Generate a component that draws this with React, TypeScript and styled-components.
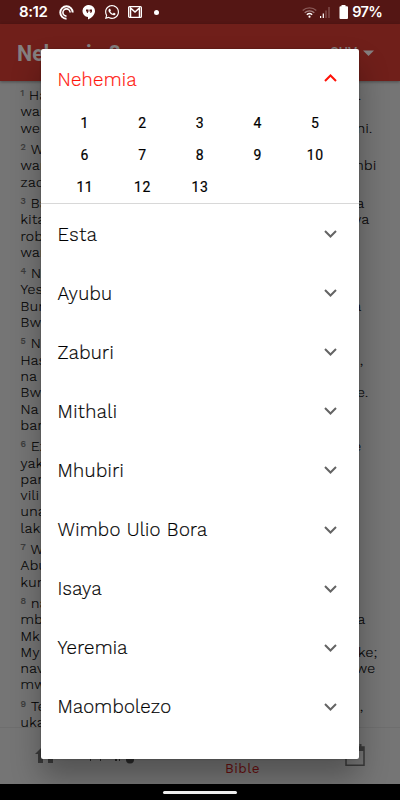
import React from "react";
import styled, { createGlobalStyle } from "styled-components";
import { FaWhatsapp } from "react-icons/fa";

const GlobalStyle = createGlobalStyle`
  * { box-sizing: border-box; }
  body { margin: 0; overflow: hidden; background: #000; }
`;

const reading = '"Work Sans", Inter, "Liberation Sans", sans-serif';

const Screen = styled.div`
  position: relative;
  width: 400px;
  height: 800px;
  overflow: hidden;
  display: flex;
  flex-direction: column;
  background: #757575;
  font-family: ${reading};
`;

const StatusBar = styled.header`
  height: 24px;
  flex: none;
  display: flex;
  align-items: center;
  padding: 0 18px 0 19px;
  background: #541614;
  color: #fff;
  svg { flex: none; display: block; }
`;

const Clock = styled.span`
  width: 39.5px;
  font: 600 15px/24px Inter, sans-serif;
  letter-spacing: -0.4px;
`;

const StatusIcons = styled.div`
  display: flex;
  align-items: center;
  gap: 8px;
  flex: 1;
`;

const Dot = styled.i`
  width: 5px;
  height: 5px;
  margin-left: 4px;
  border-radius: 50%;
  background: #fff;
`;

const Battery = styled.span`
  font: 600 14.5px/24px Inter, sans-serif;
  letter-spacing: -0.7px;
  margin-left: 4px;
`;

const AppBar = styled.div`
  height: 57px;
  flex: none;
  display: flex;
  align-items: center;
  justify-content: space-between;
  padding: 0 26px 0 17px;
  background: #701f1a;
  color: #858080;
  box-shadow: 0 1px 3px rgba(0, 0, 0, 0.35);
  z-index: 1;
`;

const Title = styled.h1`
  margin: 0;
  padding-top: 2px;
  font: 700 21.5px/55px Roboto, sans-serif;
`;

const Version = styled.div`
  display: flex;
  align-items: center;
  gap: 6px;
  font: 500 14px/55px Roboto, sans-serif;
`;

const VersionName = styled.span`
  padding-top: 2px;
`;

const Scripture = styled.main`
  height: 646px;
  flex: none;
  overflow: hidden;
  padding: 6px 0 0 20.5px;
  color: #000;
`;

const Verse = styled.section`
  margin-bottom: 5.2px;
`;

const Line = styled.div<{ $end: number }>`
  display: flex;
  justify-content: space-between;
  width: ${(p) => p.$end - 21}px;
  height: 16.27px;
  font-size: 14px;
  line-height: 16.27px;
  font-weight: 300;
  letter-spacing: 0.4px;
  -webkit-text-stroke: 0.15px;
  white-space: pre;
`;

const VerseNumber = styled.sup`
  display: inline-block;
  font-size: 9px;
  line-height: 8px;
  vertical-align: 4px;
  font-weight: 500;
  color: #3c3c3c;
  margin-right: 4.5px;
`;

const BottomNav = styled.nav`
  height: 57px;
  flex: none;
  display: grid;
  grid-template-columns: 89px 46px 215px 10px;
  border-top: 1px solid #6e6e6e;
`;

const NavItem = styled.div<{ $active?: boolean }>`
  display: flex;
  flex-direction: column;
  align-items: center;
  padding-top: 16px;
  font-size: 13.5px;
  line-height: 16px;
  letter-spacing: 0.4px;
  color: ${(p) => (p.$active ? "#680e0e" : "#3a3a3a")};
  svg { flex: none; }
`;

const NavLabel = styled.span`
  margin-top: 15.5px;
`;

const GestureBar = styled.footer`
  height: 16px;
  flex: none;
  display: flex;
  justify-content: center;
  padding-top: 7px;
  background: #000;
  z-index: 3;
`;

const Handle = styled.i`
  width: 74px;
  height: 3px;
  border-radius: 2px;
  background: #eee;
`;

const Dialog = styled.div`
  position: absolute;
  z-index: 2;
  top: 49px;
  left: 41px;
  width: 318px;
  height: 710px;
  border-radius: 2px;
  background: #fff;
  box-shadow: 0 0 2px rgba(0, 0, 0, 0.35), 0 18px 30px rgba(0, 0, 0, 0.3);
`;

const Book = styled.div<{ $open?: boolean }>`
  height: ${(p) => (p.$open ? 58 : 59.1)}px;
  display: flex;
  align-items: center;
  justify-content: space-between;
  padding: ${(p) => (p.$open ? 3 : 2)}px 22px 0 16.5px;
  color: ${(p) => (p.$open ? "#ff1208" : "#000")};
`;

const BookName = styled.span<{ $spacing: number }>`
  font-size: 18.6px;
  line-height: 24px;
  font-weight: 300;
  -webkit-text-stroke: 0.2px;
  letter-spacing: ${(p) => p.$spacing}px;
`;

const Chevron = styled.svg<{ $open?: boolean }>`
  width: 13px;
  height: 8px;
  margin-top: ${(p) => (p.$open ? -3 : -1)}px;
  fill: none;
  stroke: ${(p) => (p.$open ? "#ff1208" : "#646464")};
  stroke-width: 2;
  transform: ${(p) => (p.$open ? "rotate(180deg)" : "none")};
`;

const Chapters = styled.div`
  height: 97px;
  display: grid;
  grid-template-columns: repeat(5, 57.6px);
  grid-auto-rows: 32px;
  padding: 0 15px;
  border-bottom: 1px solid #d8d8d8;
`;

const Chapter = styled.span`
  font: 400 14px/32px Roboto, sans-serif;
  -webkit-text-stroke: 0.2px;
  letter-spacing: 0.5px;
  text-align: center;
  color: #000;
`;

type TextLine = [left: string, right?: string, end?: number];

const verses: TextLine[][] = [
  [["Ha", ".", 362], ["wan"], ["wen", "ni.", 373]],
  [["Wa"], ["wan", "mbi", 377], ["zac"]],
  [["Ba", "a", 365], ["kita", "ya", 370], ["rob"], ["wan"]],
  [["Na"], ["Yes"], ["Bun", "a", 362], ["Bwa"]],
  [["Na"], ["Has", ",", 364], ["na"], ["Bwa", "e.", 369], ["Na"], ["bar"]],
  [["Ez", "e", 362], ["yak"], ["pan"], ["vili"], ["una"], ["lak"]],
  [["Wa"], ["Abu"], ["kun"]],
  [["na"], ["mb", "a", 366], ["Mk"], ["My", "ke;", 378], ["nav", "we", 376], ["mw"]],
  [["Te", ",", 364], ["uka"]],
];

const books: [string, number][] = [
  ["Esta", 0.5],
  ["Ayubu", 0.3],
  ["Zaburi", 0.3],
  ["Mithali", 0.4],
  ["Mhubiri", 0.35],
  ["Wimbo Ulio Bora", 0.28],
  ["Isaya", 0.3],
  ["Yeremia", 0.25],
  ["Maombolezo", 0.22],
];

const Arrow = ({ open = false }: { open?: boolean }) => (
  <Chevron $open={open} viewBox="0 0 13 8">
    <path d="M1 1l5.5 5.5L12 1" />
  </Chevron>
);

export default function App() {
  return (
    <>
      <GlobalStyle />
      <Screen>
        <StatusBar>
          <Clock>8:12</Clock>
          <StatusIcons>
            <svg width="15" height="15" viewBox="0 0 15 15" fill="none" stroke="#fff">
              <path d="M7.5 13.7A6.2 6.2 0 1 1 13.7 7.5" strokeWidth="2" />
              <path d="M7.5 11.1A3.6 3.6 0 1 1 11.1 7.5" strokeWidth="1.6" />
            </svg>
            <svg width="14" height="15" viewBox="0 0 14 15">
              <path d="M7 0a6 6 0 0 0-1 12v2.5C10 13 13 9.500 13 6A6 6 0 0 0 7 0" fill="#fff" />
              <path d="M4 4.500h2.500v2L5.500 8H4.700l.5-1.500H4zm3.500 0H10v2L9 8h-.8l.5-1.500H7.500z" fill="#541614" />
            </svg>
            <FaWhatsapp size={16} />
            <svg width="14" height="12" viewBox="0 0 14 12" fill="none" stroke="#fff">
              <rect x=".6" y=".6" width="12.800" height="10.800" rx="1" strokeWidth="1.200" />
              <path d="M2.500 11V2L7 6l4.500-4v9" strokeWidth="1.500" />
            </svg>
            <Dot />
          </StatusIcons>
          <svg width="15" height="12" viewBox="0 0 15 12" fill="none" strokeWidth="1.300">
            <path d="M.7 4.500a10 10 0 0 1 13.600 0" stroke="#8a5a58" />
            <path d="M2.700 6.700a7 7 0 0 1 9.600 0" stroke="#a58080" />
            <path d="M4.800 8.700a4 4 0 0 1 5.400 0" stroke="#fff" />
            <circle cx="7.500" cy="10.700" r="1.100" fill="#fff" />
          </svg>
          <svg width="14" height="12" viewBox="0 0 14 12">
            <path d="M3 10h1.200v2H3zM5.700 7.500h1.200V12H5.700z" fill="#fff" />
            <path d="M8.400 4.500h1.200V12H8.400zM11.400 1h1.200v11h-1.200z" fill="#8a5a58" />
          </svg>
          <svg width="17" height="14" viewBox="0 0 17 14">
            <path d="M10.500 0h4v1.300H16a1 1 0 0 1 1 1V13a1 1 0 0 1-1 1H9.500a1 1 0 0 1-1-1V2.300a1 1 0 0 1 1-1h1z" fill="#fff" />
          </svg>
          <Battery>97%</Battery>
        </StatusBar>
        <AppBar>
          <Title>Nehemia 8</Title>
          <Version>
            <VersionName>SUV</VersionName>
            <svg width="11" height="6" viewBox="0 0 11 6"><path d="M0 .5h11L5.500 6z" fill="#858080" /></svg>
          </Version>
        </AppBar>
        <Scripture>
          {verses.map((lines, i) => (
            <Verse key={i}>
              {lines.map(([left, right, end], j) => (
                <Line key={j} $end={end ?? 360}>
                  <span>
                    {j === 0 && <VerseNumber>{i + 1}</VerseNumber>}
                    {left}
                  </span>
                  {right && <span>{right}</span>}
                </Line>
              ))}
            </Verse>
          ))}
        </Scripture>
        <BottomNav>
          <NavItem>
            <svg width="20" height="19" viewBox="0 0 20 19" fill="#3a3a3a"><path d="M0 10L7 3V1h6l7 9h-2v9h-5v-6H8v6H3v-9z" /></svg>
          </NavItem>
          <NavItem>
            <svg width="46" height="20" viewBox="0 0 46 20" fill="#292929">
              <path d="M1 14h1v3H1zM11 14h1v3h-1zM26 14h2v3h-2zM30 14h1v3h-1z" />
              <circle cx="41" cy="15.500" r="4" />
            </svg>
          </NavItem>
          <NavItem $active>
            <NavLabel>Bible</NavLabel>
          </NavItem>
          <NavItem>
            <svg width="20" height="23" viewBox="0 0 20 23" fill="none" stroke="#3a3a3a" strokeWidth="1.500">
              <path d="M1 3h18v18.200H1z" />
              <path d="M1 5h18" strokeWidth="4" />
              <path d="M15.500 0v5" strokeWidth="2" />
            </svg>
          </NavItem>
        </BottomNav>
        <GestureBar><Handle /></GestureBar>
        <Dialog role="dialog">
          <Book $open>
            <BookName $spacing={0.3}>Nehemia</BookName>
            <Arrow open />
          </Book>
          <Chapters>
            {Array.from({ length: 13 }, (_, i) => <Chapter key={i}>{i + 1}</Chapter>)}
          </Chapters>
          {books.map(([name, spacing]) => (
            <Book key={name}>
              <BookName $spacing={spacing}>{name}</BookName>
              <Arrow />
            </Book>
          ))}
        </Dialog>
      </Screen>
    </>
  );
}
